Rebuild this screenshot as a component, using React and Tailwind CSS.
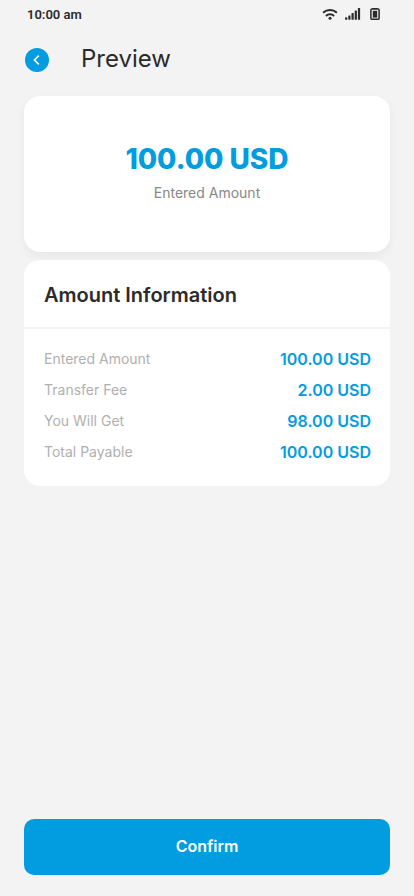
const summary = [
    { label: 'Entered Amount', value: '100.00 USD' },
    { label: 'Transfer Fee', value: '2.00 USD' },
    { label: 'You Will Get', value: '98.00 USD' },
    { label: 'Total Payable', value: '100.00 USD' }
];

function WifiIcon() {
    return (
        <svg viewBox="0 0 16 12" className="w-4 h-3" fill="none" stroke="currentColor" strokeWidth="2" aria-hidden="true">
            <path d="M1.1 4.7C5 1.1 11 1.1 14.9 4.7" />
            <path d="M3.9 7.9c2.3-2.1 5.9-2.1 8.2 0" />
            <circle cx="8" cy="10.2" r="1.5" fill="currentColor" stroke="none" />
        </svg>
    );
}

function SignalIcon() {
    return (
        <svg viewBox="0 0 16 12" className="w-4 h-3" fill="currentColor" aria-hidden="true">
            <rect x="0.1" y="9.2" width="2.2" height="2.6" rx="0.5" />
            <rect x="3.3" y="7.4" width="2.2" height="4.4" rx="0.5" />
            <rect x="6.5" y="5" width="2.2" height="6.8" rx="0.5" />
            <rect x="9.7" y="2.6" width="2.2" height="9.2" rx="0.5" />
            <rect x="12.9" y="0" width="2.2" height="11.8" rx="0.5" />
        </svg>
    );
}

function BatteryIcon() {
    return (
        <svg viewBox="0 0 10 12" className="w-[10px] h-3" fill="none" stroke="currentColor" aria-hidden="true">
            <path d="M2.5 0h5v1h-5z" fill="currentColor" stroke="none" />
            <rect x="0.9" y="1.1" width="8.2" height="10.2" rx="1" strokeWidth="1.5" />
            <rect x="2.8" y="2.8" width="4.4" height="6.8" fill="currentColor" stroke="none" />
        </svg>
    );
}

function StatusBar() {
    return (
        <div className="flex items-end justify-between h-6 pl-[27px] pr-[34px]">
            <span className="font-['Roboto',sans-serif] text-[13px] leading-[18px] font-semibold">10:00 am</span>
            <div className="flex items-center pb-1">
                <WifiIcon />
                <span className="ml-[7px] flex">
                    <SignalIcon />
                </span>
                <span className="ml-[9px] flex">
                    <BatteryIcon />
                </span>
            </div>
        </div>
    );
}

export default function App() {
    return (
        <div className="min-h-screen flex flex-col bg-[#f3f3f3] text-[#2b2b2b] font-['Inter',sans-serif]">
            <StatusBar />

            <header className="flex items-end gap-8 px-[25px] pt-[22px]">
                <button
                    type="button"
                    aria-label="Back"
                    className="w-6 h-6 rounded-full bg-[#029ce0] text-white flex items-center justify-center"
                >
                    <svg viewBox="0 0 24 24" className="w-6 h-6" fill="none" stroke="currentColor" strokeWidth="1.6" aria-hidden="true">
                        <path d="M13.8 7.6L9.4 12l4.4 4.4" />
                    </svg>
                </button>
                <h1 className="text-2xl leading-[26px]">Preview</h1>
            </header>

            <main className="flex-1 flex flex-col px-6 pt-6 pb-[21px]">
                <section className="flex flex-col items-center rounded-2xl bg-white px-5 pt-[47px] pb-[49px] shadow-[0_4px_10px_rgba(0,0,0,0.05)]">
                    <p className="text-[28px] leading-8 font-extrabold text-[#029ce0]">100.00 USD</p>
                    <p className="mt-2 text-sm leading-5 text-[#888888]">Entered Amount</p>
                </section>

                <section className="relative mt-2 rounded-2xl bg-white">
                    <h2 className="px-5 pt-[21px] pb-[18px] text-xl leading-7 font-semibold border-b-2 border-[#f3f3f3]">
                        Amount Information
                    </h2>
                    <dl className="flex flex-col gap-[11px] pl-5 pr-[19px] pt-5 pb-6">
                        {summary.map((row) => (
                            <div key={row.label} className="flex items-center justify-between h-5">
                                <dt className="text-sm leading-5 text-[#b0b0b0]">{row.label}</dt>
                                <dd className="text-base leading-5 font-semibold text-[#029ce0]">{row.value}</dd>
                            </div>
                        ))}
                    </dl>
                </section>

                <button
                    type="button"
                    className="mt-auto h-14 w-full rounded-[10px] bg-[#029ce0] pb-[2px] text-base font-semibold text-white"
                >
                    Confirm
                </button>
            </main>
        </div>
    );
}
